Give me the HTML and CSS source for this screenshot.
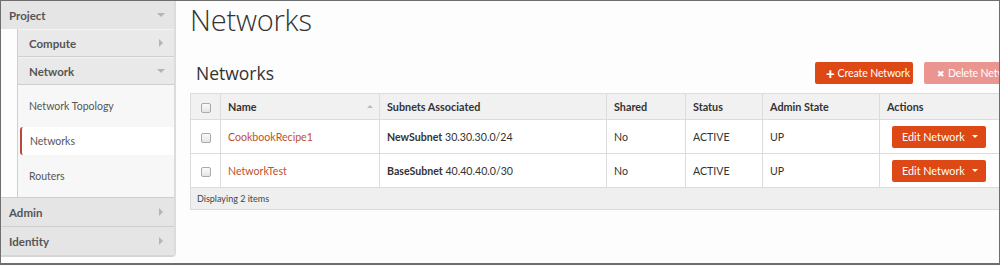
FILE: index.html
```html
<!DOCTYPE html>
<html>
<head>
<meta charset="utf-8">
<link rel="stylesheet" href="styles.css">
</head>
<body>
<div class="frame">
  <aside class="sidebar">
    <div class="dash-head">
      <span>Project</span>
      <span class="caret-down"></span>
    </div>
    <div class="panel">
      <div class="group-head"><span>Compute</span><span class="caret-right"></span></div>
      <div class="group-head"><span>Network</span><span class="caret-down"></span></div>
      <ul class="nav">
        <li class="nav-item">Network Topology</li>
        <li class="nav-item active">Networks</li>
        <li class="nav-item">Routers</li>
      </ul>
    </div>
    <div class="dash-head closed"><span>Admin</span><span class="caret-right"></span></div>
    <div class="dash-head closed last"><span>Identity</span><span class="caret-right"></span></div>
  </aside>
  <main class="main">
    <h1 class="page-title">Networks</h1>
    <div class="table-bar">
      <h2 class="table-title">Networks</h2>
      <div class="actions">
        <button class="btn btn-primary"><span class="plus">+</span>Create Network</button>
        <button class="btn btn-danger"><span class="times">&#10006;</span>Delete Networks</button>
      </div>
    </div>
    <table class="table">
      <colgroup>
        <col style="width:30px"><col style="width:159px"><col style="width:227px"><col style="width:79px"><col style="width:77px"><col style="width:117px"><col style="width:123px">
      </colgroup>
      <thead>
        <tr>
          <th class="cb"><span class="check"></span></th>
          <th class="sortable">Name<span class="sort-up"></span></th>
          <th>Subnets Associated</th>
          <th>Shared</th>
          <th>Status</th>
          <th>Admin State</th>
          <th>Actions</th>
        </tr>
      </thead>
      <tbody>
        <tr>
          <td class="cb"><span class="check"></span></td>
          <td><a class="link">CookbookRecipe1</a></td>
          <td><b>NewSubnet</b> 30.30.30.0/24</td>
          <td>No</td>
          <td>ACTIVE</td>
          <td>UP</td>
          <td><div class="split"><span class="split-main">Edit Network</span><span class="split-caret"></span></div></td>
        </tr>
        <tr>
          <td class="cb"><span class="check"></span></td>
          <td><a class="link">NetworkTest</a></td>
          <td><b>BaseSubnet</b> 40.40.40.0/30</td>
          <td>No</td>
          <td>ACTIVE</td>
          <td>UP</td>
          <td><div class="split"><span class="split-main">Edit Network</span><span class="split-caret"></span></div></td>
        </tr>
      </tbody>
      <tfoot>
        <tr><td colspan="7" class="foot">Displaying 2 items</td></tr>
      </tfoot>
    </table>
  </main>
</div>
</body>
</html>
```
FILE: styles.css
```css
* { box-sizing: border-box; }
html, body { margin: 0; padding: 0; background: #fff; }
body { font-family: Lato, "Open Sans", sans-serif; color: #333; }

.frame {
  width: 1000px;
  height: 265px;
  border: 1px solid #6e6e6e;
  border-bottom-width: 2px;
  background: #fdfdfd;
  display: flex;
  overflow: hidden;
}

.sidebar {
  width: 175px;
  flex: none;
  display: flex;
  flex-direction: column;
  align-self: flex-start;
  border-right: 2px solid #dcdcdc;
  border-bottom: 2px solid #d6d6d6;
  border-radius: 0 0 4px 0;
  overflow: hidden;
}

.dash-head {
  height: 28px;
  display: flex;
  align-items: center;
  justify-content: space-between;
  padding: 0 9px 0 8px;
  background: #e5e5e5;
  font-size: 11.5px;
  font-weight: 700;
  color: #555;
}
.dash-head.closed { border-top: 1px solid #cfcfcf; height: 29px; }

.panel {
  margin-left: 16px;
  border-left: 1px solid #cfcfcf;
  background: #f7f7f7;
}
.group-head {
  height: 28px;
  display: flex;
  align-items: center;
  justify-content: space-between;
  padding: 0 9px 0 11px;
  background: #e9e9e9;
  border-bottom: 1px solid #cfcfcf;
  border-top: 1px solid #f4f4f4;
  font-size: 11.5px;
  font-weight: 700;
  color: #555;
}
.nav {
  list-style: none;
  margin: 0;
  padding: 7px 0 7px 0;
  display: flex;
  flex-direction: column;
  gap: 7px;
}
.nav-item {
  height: 28px;
  display: flex;
  align-items: center;
  padding-left: 11px;
  font-size: 10.5px;
  color: #555;
}
.nav-item.active {
  margin-left: 2px;
  padding-left: 8px;
  background: #fff;
  border-left: 2px solid #b94a3a;
  border-radius: 3px 0 0 3px;
  margin-right: -2px;
}

.caret-down {
  width: 0; height: 0;
  border-left: 4px solid transparent;
  border-right: 4px solid transparent;
  border-top: 4px solid #b5b5b5;
}
.caret-right {
  width: 0; height: 0;
  border-top: 4px solid transparent;
  border-bottom: 4px solid transparent;
  border-left: 4px solid #b5b5b5;
  margin-right: 2px;
}

.main {
  flex: none;
  width: 844px;
  padding-left: 14px;
}
.page-title {
  margin: 1px 0 0 0;
  font-family: "Open Sans", sans-serif;
  font-size: 29px;
  font-weight: 300;
  color: #333;
  line-height: 36px;
  letter-spacing: -0.2px;
}
.table-bar {
  margin-top: 24px;
  height: 22px;
  display: flex;
  align-items: center;
  justify-content: space-between;
}
.table-title {
  margin: 0 0 0 6px;
  font-family: "Open Sans", sans-serif;
  font-size: 17.5px;
  font-weight: 400;
  color: #333;
}
.actions { display: flex; gap: 11px; }
.btn {
  height: 22px;
  border: none;
  border-radius: 2px;
  color: #fff;
  font-family: inherit;
  font-size: 10.5px;
  letter-spacing: -0.1px;
  padding: 0 6px 0 11px;
  display: flex;
  align-items: center;
  gap: 3px;
  white-space: nowrap;
}
.btn-primary { background: #dd4814; width: 98px; }
.btn-danger { background: #ea9590; width: 96px; padding-left: 13px; }
.plus { font-weight: 900; font-size: 15px; line-height: 1; }
.times { font-size: 9px; }

.table {
  margin-top: 9px;
  border-collapse: collapse;
  table-layout: fixed;
  width: 812px;
  font-size: 10.6px;
  color: #333;
}
.table th, .table td {
  border: 1px solid #dcdcdc;
  padding: 0 7px;
  text-align: left;
}
.table thead th {
  height: 26px;
  background: #f1f1f1;
  font-weight: 700;
  font-size: 10.8px;
}
.table tbody td { height: 34px; background: #fff; }
.table .cb { padding: 0; text-align: center; }
.check {
  display: inline-block;
  width: 10px;
  height: 10px;
  border: 1px solid #aaa;
  border-radius: 2px;
  background: linear-gradient(#fafafa, #e6e6e6);
  vertical-align: middle;
}
.sortable { position: relative; }
.sort-up {
  position: absolute;
  right: 6px;
  top: 11px;
  width: 0; height: 0;
  border-left: 3px solid transparent;
  border-right: 3px solid transparent;
  border-bottom: 3px solid #bbb;
}
.link { color: #c0512a; text-decoration: none; }
.split {
  display: flex;
  width: 94px;
  height: 22px;
  margin-left: 5px;
  background: #dd4814;
  border-radius: 2px;
  color: #fff;
  align-items: center;
}
.split-main { flex: 1; padding-left: 10px; font-size: 10.8px; }
.split-caret {
  width: 0; height: 0;
  margin-right: 8px;
  border-left: 3px solid transparent;
  border-right: 3px solid transparent;
  border-top: 3px solid #fff;
}
.table .foot {
  height: 22px;
  background: #efefef;
  font-size: 9px;
  color: #444;
  padding-left: 6px;
}
```
